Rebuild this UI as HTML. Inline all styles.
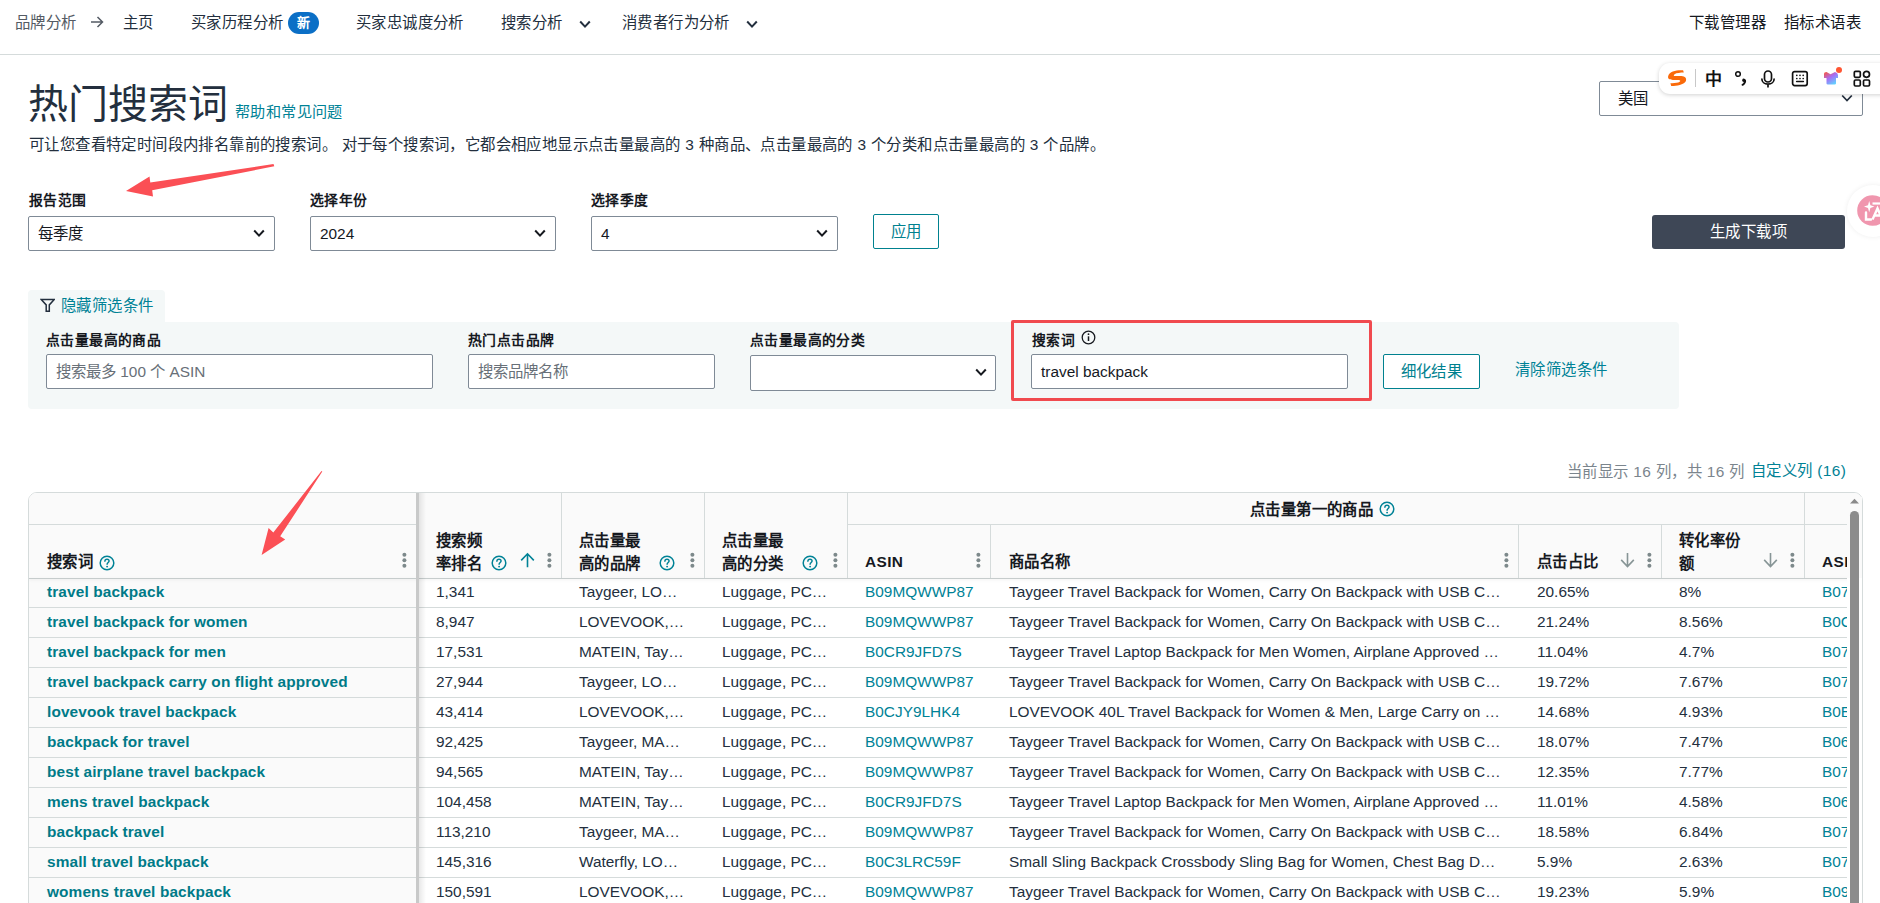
<!DOCTYPE html>
<html lang="zh-CN"><head><meta charset="utf-8">
<style>
*{box-sizing:border-box}
html,body{margin:0;padding:0;background:#fff;width:1880px;height:903px;overflow:hidden}
body{font-family:"Liberation Sans",sans-serif;color:#232f3e;font-size:15.4px;position:relative;letter-spacing:0.4px}
.tdb,.td,.tdl{letter-spacing:0}
.abs{position:absolute;white-space:nowrap}
.link{color:#008296}
.nav span{position:absolute;top:14px;font-size:15.4px;line-height:18px;white-space:nowrap}
.lbl{position:absolute;font-size:13.8px;font-weight:bold;line-height:16px;white-space:nowrap;color:#16191f}
.sel{position:absolute;height:35px;border:1px solid #7f8a96;border-radius:2px;background:#fff;font-size:15.4px;line-height:33px;padding-left:9px;white-space:nowrap;color:#16191f;letter-spacing:0}
.btn{position:absolute;border:1px solid #00818f;border-radius:2px;color:#00818f;font-size:15.4px;text-align:center;background:#fff}
.th{position:absolute;font-size:15.4px;font-weight:bold;line-height:23px;color:#16191f;white-space:nowrap}
.td{position:absolute;font-size:15.4px;line-height:18px;color:#232f3e;white-space:nowrap}
.tdl{position:absolute;font-size:15.4px;line-height:18px;color:#008296;white-space:nowrap}
.tdb{position:absolute;font-size:15.4px;line-height:18px;color:#007a88;font-weight:bold;white-space:nowrap;letter-spacing:0.12px!important}
</style></head><body>

<div class="nav abs" style="left:0;top:0;width:1880px;height:55px;border-bottom:1px solid #d5dbdb">
<span style="left:15px;color:#545b64">品牌分析</span>
<svg class="abs" style="left:90px;top:15px" width="14" height="14" viewBox="0 0 14 14"><path d="M1 7H12.5M7.5 2L12.5 7L7.5 12" stroke="#545b64" stroke-width="1.5" fill="none"/></svg>
<span style="left:123px">主页</span>
<span style="left:191px">买家历程分析</span>
<div class="abs" style="left:288px;top:12px;width:31px;height:22px;border-radius:11px;background:#0b6fc6;color:#fff;font-size:13px;font-weight:bold;text-align:center;line-height:21px">新</div>
<span style="left:356px">买家忠诚度分析</span>
<span style="left:501px">搜索分析</span>
<svg class="abs" style="left:579px;top:20px" width="12" height="9" viewBox="0 0 12 9"><path d="M1.2 1.5L6 6.6L10.8 1.5" stroke="#232f3e" stroke-width="2" fill="none"/></svg>
<span style="left:622px">消费者行为分析</span>
<svg class="abs" style="left:746px;top:20px" width="12" height="9" viewBox="0 0 12 9"><path d="M1.2 1.5L6 6.6L10.8 1.5" stroke="#232f3e" stroke-width="2" fill="none"/></svg>
<span style="left:1689px;color:#16191f">下载管理器</span>
<span style="left:1784px;color:#16191f">指标术语表</span>
</div>
<div class="abs" style="left:28px;top:80px;font-size:40px;line-height:48px;color:#232f3e;letter-spacing:0">热门搜索词</div>
<div class="abs link" style="left:235px;top:103px;font-size:15.2px;line-height:18px">帮助和常见问题</div>
<div class="abs" style="left:29px;top:136px;font-size:15.4px;line-height:17px">可让您查看特定时间段内排名靠前的搜索词。 对于每个搜索词，它都会相应地显示点击量最高的 3 种商品、点击量最高的 3 个分类和点击量最高的 3 个品牌。</div>
<div class="sel" style="left:1599px;top:81px;width:264px;height:35px;padding-left:18px">美国</div>
<svg class="abs" style="left:1841px;top:94px" width="12" height="9" viewBox="0 0 12 9"><path d="M1.2 1.5L6 6.6L10.8 1.5" stroke="#232f3e" stroke-width="1.7" fill="none"/></svg>
<div class="abs" style="left:1659px;top:63px;width:240px;height:31px;background:#fff;border-radius:11px;box-shadow:0 1px 4px rgba(0,0,0,0.18)"></div>
<svg class="abs" style="left:1660px;top:62px" width="30" height="30" viewBox="0 0 30 30"><path d="M23.1 8.3C17 7.8 9.6 9.2 8.2 14C7.4 16.6 9.6 17.9 13 17.9L18.6 17.9C20.2 17.9 20.8 18.8 19.6 19.8C18 21 14 21.4 10.4 21.2L11.2 23.9C16 24 23.6 22.8 25.8 19.2C27 16.6 25 14.2 21.4 14.1L15 14.1C13.6 14.1 13.3 13 14.6 12.2C16.4 11 20.6 10.7 23.8 10.6Z" fill="#fa6a0a"/></svg>
<div class="abs" style="left:1695px;top:69px;width:1px;height:18px;background:#c8c8c8"></div>
<div class="abs" style="left:1705px;top:70px;font-size:17px;line-height:19px;font-weight:bold;color:#111;letter-spacing:0">中</div>
<svg class="abs" style="left:1734px;top:70px" width="14" height="16" viewBox="0 0 14 16"><circle cx="4" cy="4" r="2.3" stroke="#111" stroke-width="1.5" fill="none"/><path d="M9.5 9.5C11 9.5 11.4 11 10.8 12.4C10.3 13.6 9.4 14.4 8.6 14.8" stroke="#111" stroke-width="2" fill="none" stroke-linecap="round"/><circle cx="9.6" cy="10.6" r="1.4" fill="#111"/></svg>
<svg class="abs" style="left:1760px;top:70px" width="16" height="18" viewBox="0 0 16 18"><rect x="4.5" y="1" width="7" height="11" rx="3.5" stroke="#111" stroke-width="1.7" fill="none"/><path d="M1.8 8.5C1.8 12 4.6 14.2 8 14.2C11.4 14.2 14.2 12 14.2 8.5M8 14.2V17.5" stroke="#111" stroke-width="1.7" fill="none"/></svg>
<svg class="abs" style="left:1791px;top:70px" width="18" height="17" viewBox="0 0 18 17"><rect x="1.6" y="1.6" width="14.6" height="14" rx="2" stroke="#111" stroke-width="1.7" fill="none"/><g fill="#111"><circle cx="5.8" cy="5.3" r="0.85"/><circle cx="9" cy="5.3" r="0.85"/><circle cx="12.2" cy="5.3" r="0.85"/><circle cx="5.8" cy="8.5" r="0.85"/><circle cx="9" cy="8.5" r="0.85"/><circle cx="12.2" cy="8.5" r="0.85"/></g><path d="M5.6 11.6H12.4" stroke="#111" stroke-width="1.5" stroke-linecap="round"/></svg>
<svg class="abs" style="left:1823px;top:66px" width="22" height="21" viewBox="0 0 22 21"><defs><linearGradient id="sg" x1="0" y1="0" x2="0.7" y2="1"><stop offset="0" stop-color="#ff5232"/><stop offset="0.5" stop-color="#a66ef6"/><stop offset="1" stop-color="#5fd4ff"/></linearGradient></defs><path d="M1 7.8Q1 6 3.5 6L7.5 8.3L12 6Q15 7 15 9L15 12L13 12L13 17.5Q13 18.6 11.5 18.6L5 18.6Q3.5 18.6 3.5 17.5L3.5 12L1 12Z" fill="url(#sg)"/><circle cx="16" cy="4" r="3" fill="#ff5532"/></svg>
<svg class="abs" style="left:1853px;top:70px" width="18" height="17" viewBox="0 0 18 17"><rect x="1.3" y="1.3" width="6" height="6" rx="1.2" stroke="#111" stroke-width="1.7" fill="none"/><rect x="10.5" y="1.3" width="6" height="6" rx="3" stroke="#111" stroke-width="1.7" fill="none"/><rect x="1.3" y="10" width="6" height="6" rx="1.2" stroke="#111" stroke-width="1.7" fill="none"/><rect x="10.5" y="10" width="6" height="6" rx="1.2" stroke="#111" stroke-width="1.7" fill="none"/></svg>

<div class="lbl" style="left:29px;top:193px">报告范围</div>
<div class="lbl" style="left:310px;top:193px">选择年份</div>
<div class="lbl" style="left:591px;top:193px">选择季度</div>
<div class="sel" style="left:28px;top:216px;width:247px">每季度</div>
<svg class="abs" style="left:253px;top:229px" width="12" height="9" viewBox="0 0 12 9"><path d="M1.2 1.5L6 6.6L10.8 1.5" stroke="#16191f" stroke-width="2" fill="none"/></svg>
<div class="sel" style="left:310px;top:216px;width:246px">2024</div>
<svg class="abs" style="left:534px;top:229px" width="12" height="9" viewBox="0 0 12 9"><path d="M1.2 1.5L6 6.6L10.8 1.5" stroke="#16191f" stroke-width="2" fill="none"/></svg>
<div class="sel" style="left:591px;top:216px;width:247px">4</div>
<svg class="abs" style="left:816px;top:229px" width="12" height="9" viewBox="0 0 12 9"><path d="M1.2 1.5L6 6.6L10.8 1.5" stroke="#16191f" stroke-width="2" fill="none"/></svg>
<div class="btn" style="left:873px;top:214px;width:66px;height:35px;line-height:33px">应用</div>
<div class="abs" style="left:1652px;top:215px;width:193px;height:34px;background:#3e4756;border-radius:3px;color:#fff;text-align:center;line-height:34px;font-size:15.4px">生成下载项</div>
<div class="abs" style="left:1847px;top:185px;width:52px;height:52px;border-radius:50%;background:#fff;box-shadow:0 0 5px rgba(0,0,0,0.07)"></div>
<svg class="abs" style="left:1857px;top:195px" width="32" height="32" viewBox="0 0 32 32"><circle cx="15.5" cy="15.5" r="15.3" fill="#f096ae"/><path d="M12.2 6L13.4 10.2L17.4 11.6L13.4 13L12.2 17.2L11 13L7 11.6L11 10.2Z" fill="#fff"/><path d="M9 17.5V24.5H14" stroke="#fff" stroke-width="2.4" fill="none" stroke-linecap="round"/><path d="M15.5 24.5L20.5 13.5L25.5 24.5M17.5 20.5H23.5" stroke="#fff" stroke-width="2.4" fill="none"/><path d="M15.5 8.5H23" stroke="#fff" stroke-width="2.2" fill="none"/></svg>
<div class="abs" style="left:28px;top:290px;width:137px;height:32px;background:#f4f8f8;border-radius:4px 4px 0 0"></div>
<svg class="abs" style="left:40px;top:298px" width="15" height="15" viewBox="0 0 15 15"><path d="M1.2 1.5H14.3L9.3 6.9V13.2H6.2V6.9Z" stroke="#232f3e" stroke-width="1.5" fill="none" stroke-linejoin="miter"/></svg>
<div class="abs link" style="left:61px;top:297px;font-size:15.4px;line-height:17px">隐藏筛选条件</div>
<div class="abs" style="left:28px;top:322px;width:1651px;height:87px;background:#f4f8f8;border-radius:0 4px 4px 4px"></div>
<div class="lbl" style="left:46px;top:333px">点击量最高的商品</div>
<div class="sel" style="left:46px;top:354px;width:387px;color:#687078">搜索最多 100 个 ASIN</div>
<div class="lbl" style="left:468px;top:333px">热门点击品牌</div>
<div class="sel" style="left:468px;top:354px;width:247px;color:#687078">搜索品牌名称</div>
<div class="lbl" style="left:750px;top:333px">点击量最高的分类</div>
<div class="sel" style="left:750px;top:355px;width:246px;height:36px"></div>
<svg class="abs" style="left:975px;top:368px" width="12" height="9" viewBox="0 0 12 9"><path d="M1.2 1.5L6 6.6L10.8 1.5" stroke="#16191f" stroke-width="2" fill="none"/></svg>
<div class="lbl" style="left:1032px;top:333px">搜索词</div>
<svg class="abs" style="left:1081px;top:330px" width="15" height="15" viewBox="0 0 15 15"><circle cx="7.5" cy="7.5" r="6.3" stroke="#16191f" stroke-width="1.3" fill="none"/><path d="M7.5 6.3V11" stroke="#16191f" stroke-width="1.5"/><circle cx="7.5" cy="4.2" r="0.9" fill="#16191f"/></svg>
<div class="sel" style="left:1031px;top:354px;width:317px;color:#16191f">travel backpack</div>
<div class="abs" style="left:1011px;top:320px;width:361px;height:81px;border:3px solid #f04a4f;border-radius:2px"></div>
<div class="btn" style="left:1383px;top:354px;width:97px;height:35px;line-height:33px">细化结果</div>
<div class="abs link" style="left:1515px;top:361px;font-size:15.4px;line-height:17px">清除筛选条件</div>
<div class="abs" style="left:1567px;top:463px;font-size:15.4px;line-height:17px;color:#7b858d">当前显示 16 列，共 16 列</div>
<div class="abs link" style="left:1751px;top:462px;font-size:15.4px;line-height:17px">自定义列 (16)</div>
<div class="abs" style="left:28px;top:492px;width:1835px;height:420px;border:1px solid #d5dbdb;border-radius:9px 9px 0 0;overflow:hidden;background:#fff">
<div class="abs" style="left:0;top:0;width:1850px;height:85px;background:#fafafa"></div>
<div class="abs" style="left:0;top:0;width:388px;height:420px;background:#fafafa"></div>
<div class="abs" style="left:0;top:31px;width:388px;height:1px;background:#d5dbdb"></div>
<div class="abs" style="left:818px;top:31px;width:1100px;height:1px;background:#d5dbdb"></div>
<div class="abs" style="left:0;top:85px;width:1850px;height:1px;background:#c6cccc;box-shadow:0 1px 3px rgba(0,0,0,0.10)"></div>
<div class="abs" style="left:532px;top:0px;width:1px;height:85px;background:#d5dbdb"></div>
<div class="abs" style="left:675px;top:0px;width:1px;height:85px;background:#d5dbdb"></div>
<div class="abs" style="left:818px;top:0px;width:1px;height:85px;background:#d5dbdb"></div>
<div class="abs" style="left:961px;top:31px;width:1px;height:54px;background:#d5dbdb"></div>
<div class="abs" style="left:1489px;top:31px;width:1px;height:54px;background:#d5dbdb"></div>
<div class="abs" style="left:1632px;top:31px;width:1px;height:54px;background:#d5dbdb"></div>
<div class="abs" style="left:1775px;top:0px;width:1px;height:85px;background:#d5dbdb"></div>
<div class="abs" style="left:0;top:114px;width:1850px;height:1px;background:#d5dbdb"></div>
<div class="abs" style="left:0;top:144px;width:1850px;height:1px;background:#d5dbdb"></div>
<div class="abs" style="left:0;top:174px;width:1850px;height:1px;background:#d5dbdb"></div>
<div class="abs" style="left:0;top:204px;width:1850px;height:1px;background:#d5dbdb"></div>
<div class="abs" style="left:0;top:234px;width:1850px;height:1px;background:#d5dbdb"></div>
<div class="abs" style="left:0;top:264px;width:1850px;height:1px;background:#d5dbdb"></div>
<div class="abs" style="left:0;top:294px;width:1850px;height:1px;background:#d5dbdb"></div>
<div class="abs" style="left:0;top:324px;width:1850px;height:1px;background:#d5dbdb"></div>
<div class="abs" style="left:0;top:354px;width:1850px;height:1px;background:#d5dbdb"></div>
<div class="abs" style="left:0;top:384px;width:1850px;height:1px;background:#d5dbdb"></div>
<div class="abs" style="left:0;top:414px;width:1850px;height:1px;background:#d5dbdb"></div>
<div class="abs" style="left:387px;top:0;width:3px;height:420px;background:#c8c9c9"></div>
<div class="abs" style="left:390px;top:0;width:7px;height:420px;background:linear-gradient(to right,rgba(0,0,0,0.09),rgba(0,0,0,0))"></div>
<div class="th" style="left:18px;top:57px">搜索词</div>
<svg class="abs" style="left:70px;top:62px" width="16" height="16" viewBox="0 0 16 16"><circle cx="8" cy="8" r="6.8" stroke="#008296" stroke-width="1.5" fill="none"/><path d="M5.9 6.2C5.9 5 6.8 4.2 8 4.2C9.2 4.2 10.1 5 10.1 6.1C10.1 7.4 8.1 7.6 8.1 9.2" stroke="#008296" stroke-width="1.4" fill="none" stroke-linecap="round"/><circle cx="8.1" cy="11.6" r="0.95" fill="#008296"/></svg>
<svg class="abs" style="left:373px;top:59px" width="5" height="17" viewBox="0 0 5 17"><circle cx="2.4" cy="2.7" r="2" fill="#7d898b"/><circle cx="2.4" cy="8.2" r="2" fill="#7d898b"/><circle cx="2.4" cy="13.7" r="2" fill="#7d898b"/></svg>
<div class="th" style="left:407px;top:36px">搜索频<br>率排名</div>
<svg class="abs" style="left:462px;top:62px" width="16" height="16" viewBox="0 0 16 16"><circle cx="8" cy="8" r="6.8" stroke="#008296" stroke-width="1.5" fill="none"/><path d="M5.9 6.2C5.9 5 6.8 4.2 8 4.2C9.2 4.2 10.1 5 10.1 6.1C10.1 7.4 8.1 7.6 8.1 9.2" stroke="#008296" stroke-width="1.4" fill="none" stroke-linecap="round"/><circle cx="8.1" cy="11.6" r="0.95" fill="#008296"/></svg>
<svg class="abs" style="left:491px;top:59px" width="15" height="17" viewBox="0 0 15 17"><path d="M7.5 15.3V1.8M1.2 8.4L7.5 1.8L13.8 8.4" stroke="#008296" stroke-width="1.6" fill="none"/></svg>
<svg class="abs" style="left:518px;top:59px" width="5" height="17" viewBox="0 0 5 17"><circle cx="2.4" cy="2.7" r="2" fill="#7d898b"/><circle cx="2.4" cy="8.2" r="2" fill="#7d898b"/><circle cx="2.4" cy="13.7" r="2" fill="#7d898b"/></svg>
<div class="th" style="left:550px;top:36px">点击量最<br>高的品牌</div>
<svg class="abs" style="left:630px;top:62px" width="16" height="16" viewBox="0 0 16 16"><circle cx="8" cy="8" r="6.8" stroke="#008296" stroke-width="1.5" fill="none"/><path d="M5.9 6.2C5.9 5 6.8 4.2 8 4.2C9.2 4.2 10.1 5 10.1 6.1C10.1 7.4 8.1 7.6 8.1 9.2" stroke="#008296" stroke-width="1.4" fill="none" stroke-linecap="round"/><circle cx="8.1" cy="11.6" r="0.95" fill="#008296"/></svg>
<svg class="abs" style="left:661px;top:59px" width="5" height="17" viewBox="0 0 5 17"><circle cx="2.4" cy="2.7" r="2" fill="#7d898b"/><circle cx="2.4" cy="8.2" r="2" fill="#7d898b"/><circle cx="2.4" cy="13.7" r="2" fill="#7d898b"/></svg>
<div class="th" style="left:693px;top:36px">点击量最<br>高的分类</div>
<svg class="abs" style="left:773px;top:62px" width="16" height="16" viewBox="0 0 16 16"><circle cx="8" cy="8" r="6.8" stroke="#008296" stroke-width="1.5" fill="none"/><path d="M5.9 6.2C5.9 5 6.8 4.2 8 4.2C9.2 4.2 10.1 5 10.1 6.1C10.1 7.4 8.1 7.6 8.1 9.2" stroke="#008296" stroke-width="1.4" fill="none" stroke-linecap="round"/><circle cx="8.1" cy="11.6" r="0.95" fill="#008296"/></svg>
<svg class="abs" style="left:804px;top:59px" width="5" height="17" viewBox="0 0 5 17"><circle cx="2.4" cy="2.7" r="2" fill="#7d898b"/><circle cx="2.4" cy="8.2" r="2" fill="#7d898b"/><circle cx="2.4" cy="13.7" r="2" fill="#7d898b"/></svg>
<div class="th" style="left:1250px;top:5px;left:1221px">点击量第一的商品</div>
<svg class="abs" style="left:1350px;top:8px" width="16" height="16" viewBox="0 0 16 16"><circle cx="8" cy="8" r="6.8" stroke="#008296" stroke-width="1.5" fill="none"/><path d="M5.9 6.2C5.9 5 6.8 4.2 8 4.2C9.2 4.2 10.1 5 10.1 6.1C10.1 7.4 8.1 7.6 8.1 9.2" stroke="#008296" stroke-width="1.4" fill="none" stroke-linecap="round"/><circle cx="8.1" cy="11.6" r="0.95" fill="#008296"/></svg>
<div class="th" style="left:836px;top:57px">ASIN</div>
<svg class="abs" style="left:947px;top:59px" width="5" height="17" viewBox="0 0 5 17"><circle cx="2.4" cy="2.7" r="2" fill="#7d898b"/><circle cx="2.4" cy="8.2" r="2" fill="#7d898b"/><circle cx="2.4" cy="13.7" r="2" fill="#7d898b"/></svg>
<div class="th" style="left:980px;top:57px">商品名称</div>
<svg class="abs" style="left:1475px;top:59px" width="5" height="17" viewBox="0 0 5 17"><circle cx="2.4" cy="2.7" r="2" fill="#7d898b"/><circle cx="2.4" cy="8.2" r="2" fill="#7d898b"/><circle cx="2.4" cy="13.7" r="2" fill="#7d898b"/></svg>
<div class="th" style="left:1508px;top:57px">点击占比</div>
<svg class="abs" style="left:1591px;top:59px" width="15" height="17" viewBox="0 0 15 17"><path d="M7.5 1V14.5M1.2 7.9L7.5 14.5L13.8 7.9" stroke="#879596" stroke-width="1.6" fill="none"/></svg>
<svg class="abs" style="left:1618px;top:59px" width="5" height="17" viewBox="0 0 5 17"><circle cx="2.4" cy="2.7" r="2" fill="#7d898b"/><circle cx="2.4" cy="8.2" r="2" fill="#7d898b"/><circle cx="2.4" cy="13.7" r="2" fill="#7d898b"/></svg>
<div class="th" style="left:1650px;top:36px">转化率份<br>额</div>
<svg class="abs" style="left:1734px;top:59px" width="15" height="17" viewBox="0 0 15 17"><path d="M7.5 1V14.5M1.2 7.9L7.5 14.5L13.8 7.9" stroke="#879596" stroke-width="1.6" fill="none"/></svg>
<svg class="abs" style="left:1761px;top:59px" width="5" height="17" viewBox="0 0 5 17"><circle cx="2.4" cy="2.7" r="2" fill="#7d898b"/><circle cx="2.4" cy="8.2" r="2" fill="#7d898b"/><circle cx="2.4" cy="13.7" r="2" fill="#7d898b"/></svg>
<div class="th" style="left:1793px;top:57px">ASIN</div>
<div class="tdb" style="left:18px;top:90px">travel backpack</div>
<div class="td" style="left:407px;top:90px">1,341</div>
<div class="td" style="left:550px;top:90px">Taygeer, LO…</div>
<div class="td" style="left:693px;top:90px">Luggage, PC…</div>
<div class="tdl" style="left:836px;top:90px">B09MQWWP87</div>
<div class="td" style="left:980px;top:90px">Taygeer Travel Backpack for Women, Carry On Backpack with USB C…</div>
<div class="td" style="left:1508px;top:90px">20.65%</div>
<div class="td" style="left:1650px;top:90px">8%</div>
<div class="tdl" style="left:1793px;top:90px">B07</div>
<div class="tdb" style="left:18px;top:120px">travel backpack for women</div>
<div class="td" style="left:407px;top:120px">8,947</div>
<div class="td" style="left:550px;top:120px">LOVEVOOK,…</div>
<div class="td" style="left:693px;top:120px">Luggage, PC…</div>
<div class="tdl" style="left:836px;top:120px">B09MQWWP87</div>
<div class="td" style="left:980px;top:120px">Taygeer Travel Backpack for Women, Carry On Backpack with USB C…</div>
<div class="td" style="left:1508px;top:120px">21.24%</div>
<div class="td" style="left:1650px;top:120px">8.56%</div>
<div class="tdl" style="left:1793px;top:120px">B0C</div>
<div class="tdb" style="left:18px;top:150px">travel backpack for men</div>
<div class="td" style="left:407px;top:150px">17,531</div>
<div class="td" style="left:550px;top:150px">MATEIN, Tay…</div>
<div class="td" style="left:693px;top:150px">Luggage, PC…</div>
<div class="tdl" style="left:836px;top:150px">B0CR9JFD7S</div>
<div class="td" style="left:980px;top:150px">Taygeer Travel Laptop Backpack for Men Women, Airplane Approved …</div>
<div class="td" style="left:1508px;top:150px">11.04%</div>
<div class="td" style="left:1650px;top:150px">4.7%</div>
<div class="tdl" style="left:1793px;top:150px">B07</div>
<div class="tdb" style="left:18px;top:180px">travel backpack carry on flight approved</div>
<div class="td" style="left:407px;top:180px">27,944</div>
<div class="td" style="left:550px;top:180px">Taygeer, LO…</div>
<div class="td" style="left:693px;top:180px">Luggage, PC…</div>
<div class="tdl" style="left:836px;top:180px">B09MQWWP87</div>
<div class="td" style="left:980px;top:180px">Taygeer Travel Backpack for Women, Carry On Backpack with USB C…</div>
<div class="td" style="left:1508px;top:180px">19.72%</div>
<div class="td" style="left:1650px;top:180px">7.67%</div>
<div class="tdl" style="left:1793px;top:180px">B07</div>
<div class="tdb" style="left:18px;top:210px">lovevook travel backpack</div>
<div class="td" style="left:407px;top:210px">43,414</div>
<div class="td" style="left:550px;top:210px">LOVEVOOK,…</div>
<div class="td" style="left:693px;top:210px">Luggage, PC…</div>
<div class="tdl" style="left:836px;top:210px">B0CJY9LHK4</div>
<div class="td" style="left:980px;top:210px">LOVEVOOK 40L Travel Backpack for Women &amp; Men, Large Carry on …</div>
<div class="td" style="left:1508px;top:210px">14.68%</div>
<div class="td" style="left:1650px;top:210px">4.93%</div>
<div class="tdl" style="left:1793px;top:210px">B0E</div>
<div class="tdb" style="left:18px;top:240px">backpack for travel</div>
<div class="td" style="left:407px;top:240px">92,425</div>
<div class="td" style="left:550px;top:240px">Taygeer, MA…</div>
<div class="td" style="left:693px;top:240px">Luggage, PC…</div>
<div class="tdl" style="left:836px;top:240px">B09MQWWP87</div>
<div class="td" style="left:980px;top:240px">Taygeer Travel Backpack for Women, Carry On Backpack with USB C…</div>
<div class="td" style="left:1508px;top:240px">18.07%</div>
<div class="td" style="left:1650px;top:240px">7.47%</div>
<div class="tdl" style="left:1793px;top:240px">B06</div>
<div class="tdb" style="left:18px;top:270px">best airplane travel backpack</div>
<div class="td" style="left:407px;top:270px">94,565</div>
<div class="td" style="left:550px;top:270px">MATEIN, Tay…</div>
<div class="td" style="left:693px;top:270px">Luggage, PC…</div>
<div class="tdl" style="left:836px;top:270px">B09MQWWP87</div>
<div class="td" style="left:980px;top:270px">Taygeer Travel Backpack for Women, Carry On Backpack with USB C…</div>
<div class="td" style="left:1508px;top:270px">12.35%</div>
<div class="td" style="left:1650px;top:270px">7.77%</div>
<div class="tdl" style="left:1793px;top:270px">B07</div>
<div class="tdb" style="left:18px;top:300px">mens travel backpack</div>
<div class="td" style="left:407px;top:300px">104,458</div>
<div class="td" style="left:550px;top:300px">MATEIN, Tay…</div>
<div class="td" style="left:693px;top:300px">Luggage, PC…</div>
<div class="tdl" style="left:836px;top:300px">B0CR9JFD7S</div>
<div class="td" style="left:980px;top:300px">Taygeer Travel Laptop Backpack for Men Women, Airplane Approved …</div>
<div class="td" style="left:1508px;top:300px">11.01%</div>
<div class="td" style="left:1650px;top:300px">4.58%</div>
<div class="tdl" style="left:1793px;top:300px">B06</div>
<div class="tdb" style="left:18px;top:330px">backpack travel</div>
<div class="td" style="left:407px;top:330px">113,210</div>
<div class="td" style="left:550px;top:330px">Taygeer, MA…</div>
<div class="td" style="left:693px;top:330px">Luggage, PC…</div>
<div class="tdl" style="left:836px;top:330px">B09MQWWP87</div>
<div class="td" style="left:980px;top:330px">Taygeer Travel Backpack for Women, Carry On Backpack with USB C…</div>
<div class="td" style="left:1508px;top:330px">18.58%</div>
<div class="td" style="left:1650px;top:330px">6.84%</div>
<div class="tdl" style="left:1793px;top:330px">B07</div>
<div class="tdb" style="left:18px;top:360px">small travel backpack</div>
<div class="td" style="left:407px;top:360px">145,316</div>
<div class="td" style="left:550px;top:360px">Waterfly, LO…</div>
<div class="td" style="left:693px;top:360px">Luggage, PC…</div>
<div class="tdl" style="left:836px;top:360px">B0C3LRC59F</div>
<div class="td" style="left:980px;top:360px">Small Sling Backpack Crossbody Sling Bag for Women, Chest Bag D…</div>
<div class="td" style="left:1508px;top:360px">5.9%</div>
<div class="td" style="left:1650px;top:360px">2.63%</div>
<div class="tdl" style="left:1793px;top:360px">B07</div>
<div class="tdb" style="left:18px;top:390px">womens travel backpack</div>
<div class="td" style="left:407px;top:390px">150,591</div>
<div class="td" style="left:550px;top:390px">LOVEVOOK,…</div>
<div class="td" style="left:693px;top:390px">Luggage, PC…</div>
<div class="tdl" style="left:836px;top:390px">B09MQWWP87</div>
<div class="td" style="left:980px;top:390px">Taygeer Travel Backpack for Women, Carry On Backpack with USB C…</div>
<div class="td" style="left:1508px;top:390px">19.23%</div>
<div class="td" style="left:1650px;top:390px">5.9%</div>
<div class="tdl" style="left:1793px;top:390px">B09</div>
</div>
<div class="abs" style="left:1847px;top:497px;width:15px;height:406px;background:linear-gradient(#fafafa 0,#fafafa 81px,#fff 81px)"></div>
<svg class="abs" style="left:1849px;top:497px" width="11" height="8" viewBox="0 0 11 8"><path d="M1 6.5L5.5 1.8L10 6.5Z" fill="#8a8a8a"/></svg>
<div class="abs" style="left:1850px;top:511px;width:9px;height:400px;background:#8c8c8c;border-radius:4.5px"></div>
<svg class="abs" style="left:0;top:0" width="1880" height="903" viewBox="0 0 1880 903"><path d="M126 191L149.5 176.5L150.3 182.6L273.5 164L274.3 166.3L152.2 190.3L153 196.5Z" fill="#fb4f55"/><path d="M261.6 555L268.6 528L273.3 532.6L321.5 471L322.3 471.6L280.2 536.3L285.2 539.5Z" fill="#fb4f55"/></svg>
</body></html>
